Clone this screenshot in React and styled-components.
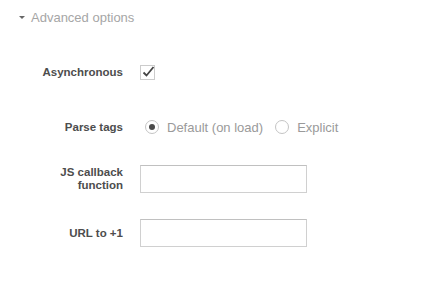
import styled, { createGlobalStyle } from 'styled-components';

const GlobalStyle = createGlobalStyle`
    body {
        margin: 0;
        background: #ffffff;
        font-family: "Liberation Sans", Arial, sans-serif;
    }
`;

const Panel = styled.div`
    width: 433px;
    height: 284px;
    padding-top: 9px;
    box-sizing: border-box;
`;

const Toggle = styled.div`
    display: flex;
    align-items: center;
    gap: 6px;
    padding-left: 19px;
    height: 16px;
    font-size: 13px;
    color: #a6a6a6;
    cursor: pointer;
`;

const Caret = styled.span`
    width: 0;
    height: 0;
    border-left: 3px solid transparent;
    border-right: 3px solid transparent;
    border-top: 3px solid #666;
    margin-top: 1px;
`;

const Form = styled.div`
    display: flex;
    flex-direction: column;
    gap: 26px;
    margin-top: 33px;
`;

const Row = styled.div`
    display: grid;
    grid-template-columns: 123px 1fr;
    column-gap: 17px;
    align-items: center;
    min-height: 28px;
    margin-top: ${(p) => p.$shift || 0}px;
`;

const Label = styled.div`
    text-align: right;
    font-size: 11.5px;
    font-weight: bold;
    color: #4d4d4d;
    line-height: 13px;
`;

const Controls = styled.div`
    display: flex;
    align-items: center;
`;

const RadioOption = styled.label`
    display: flex;
    align-items: center;
    gap: 8px;
    margin-left: ${(p) => p.$offset}px;
    font-size: 13px;
    color: #9a9a9a;
`;

const RadioCircle = styled.span`
    width: 14px;
    height: 14px;
    box-sizing: border-box;
    border: 1px solid #c4c4c4;
    border-radius: 50%;
    display: flex;
    align-items: center;
    justify-content: center;

    &::after {
        content: '';
        width: 6px;
        height: 6px;
        border-radius: 50%;
        background: ${(p) => (p.$checked ? '#4a4a4a' : 'transparent')};
    }
`;

const TextInput = styled.input`
    width: 167px;
    height: 28px;
    box-sizing: border-box;
    border: 1px solid #d0d0d0;
    border-top-color: #c0c0c0;
    padding: 0 6px;
    font-size: 13px;
    outline: none;
`;

const CheckBox = () => (
    <svg width="16" height="16" viewBox="0 0 16 16">
        <rect x="0.5" y="1.5" width="14" height="14" fill="#fff" stroke="#cccccc" />
        <path d="M3.5 8.5 L6.5 11.5 L13.5 3" fill="none" stroke="#444" strokeWidth="1.8" />
    </svg>
);

const App = () => (
    <Panel>
        <GlobalStyle />
        <Toggle>
            <Caret />
            Advanced options
        </Toggle>
        <Form>
            <Row>
                <Label>Asynchronous</Label>
                <Controls>
                    <CheckBox />
                </Controls>
            </Row>
            <Row $shift={1}>
                <Label>Parse tags</Label>
                <Controls>
                    <RadioOption $offset={5}>
                        <RadioCircle $checked />
                        Default (on load)
                    </RadioOption>
                    <RadioOption $offset={12}>
                        <RadioCircle />
                        Explicit
                    </RadioOption>
                </Controls>
            </Row>
            <Row $shift={-2}>
                <Label>
                    JS callback
                    <br />
                    function
                </Label>
                <TextInput />
            </Row>
            <Row>
                <Label>URL to +1</Label>
                <TextInput />
            </Row>
        </Form>
    </Panel>
);

export default App;
